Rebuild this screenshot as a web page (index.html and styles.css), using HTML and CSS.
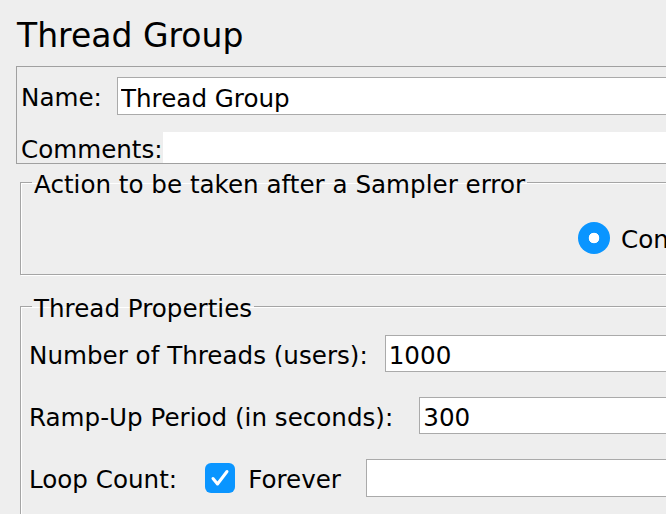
FILE: index.html
```html
<!DOCTYPE html>
<html lang="en">

<head>
    <meta charset="UTF-8">
    <meta name="viewport" content="width=device-width, initial-scale=1.0">
    <title>Thread Group</title>
    <link rel="stylesheet" href="styles.css">
</head>

<body>
    <div id="page">
        <h1 class="title">Thread Group</h1>

        <div class="name-box">
            <div class="row name-row">
                <label class="label name-label">Name:</label>
                <input class="field" type="text" value="Thread Group">
            </div>
            <div class="row comments-row">
                <label class="label">Comments:</label>
                <textarea class="comments"></textarea>
            </div>
        </div>

        <fieldset class="group action-group">
            <legend>Action to be taken after a Sampler error</legend>
            <div class="radios">
                <label class="radio">
                    <input type="radio" name="action" checked>
                    <span class="label">Continue</span>
                </label>
            </div>
        </fieldset>

        <fieldset class="group thread-group">
            <legend>Thread Properties</legend>
            <div class="row prop-row first">
                <label class="label">Number of Threads (users):</label>
                <input class="field" type="text" value="1000">
            </div>
            <div class="row prop-row">
                <label class="label">Ramp-Up Period (in seconds):</label>
                <input class="field ramp-field" type="text" value="300">
            </div>
            <div class="row prop-row loop-row">
                <label class="label">Loop Count:</label>
                <span class="check">
                    <svg width="30" height="30" viewBox="0 0 30 30">
                        <path d="M8 15.5 L12.5 21 L22 8.5" fill="none" stroke="#fff" stroke-width="3"
                            stroke-linecap="round" stroke-linejoin="round" />
                    </svg>
                </span>
                <span class="label forever">Forever</span>
                <input class="field loop-field" type="text" value="">
            </div>
        </fieldset>
    </div>
</body>

</html>
```

FILE: styles.css
```css
* {
    margin: 0;
    padding: 0;
    box-sizing: border-box;
}

body {
    background: #eeeeee;
    font-family: "DejaVu Sans", sans-serif;
    font-size: 24.6px;
    color: #000;
    overflow: hidden;
}

#page {
    width: 760px;
}

.title {
    font-size: 33px;
    font-weight: normal;
    line-height: 36px;
    padding: 18px 0 0 17px;
}

.row {
    display: flex;
    align-items: center;
}

.label {
    line-height: 28px;
    padding-top: 4px;
    white-space: nowrap;
}

.field {
    flex: 1;
    height: 100%;
    min-width: 0;
    border: 1px solid #aaaaaa;
    background: #fff;
    font: inherit;
    color: #000;
    padding: 4px 3px 0;
    outline: none;
}

/* name / comments */
.name-box {
    margin: 12px 0 0 16px;
    border: 1px solid #a0a0a0;
    padding: 10px 0 0 4px;
}

.name-row {
    height: 38px;
}

.name-label {
    width: 96px;
}

.comments-row {
    height: 31px;
    margin-top: 17px;
}

.comments {
    flex: 1;
    height: 31px;
    border: 0;
    resize: none;
    background: #fff;
    font: inherit;
}

/* titled borders */
.group {
    margin: 2px 0 0 20px;
    border: 1px solid #a5a5a5;
    box-shadow: 1px 1px 0 #fff, inset 1px 1px 0 #fff;
    padding: 0 0 20px 8px;
    min-width: 0;
}

.group legend {
    margin-left: 3px;
    padding: 5px 2px 0;
    line-height: 28px;
}

.radios {
    display: flex;
    height: 32px;
    margin: 23px 0 0 549px;
}

.radio {
    display: flex;
    align-items: center;
    gap: 11px;
    white-space: nowrap;
}

.radio input {
    appearance: none;
    -webkit-appearance: none;
    flex: none;
    width: 32px;
    height: 32px;
    border-radius: 50%;
    background: radial-gradient(circle, #fff 0 5px, #0a95ff 5.6px);
}

.thread-group {
    margin-top: 15px;
}

.prop-row {
    height: 37px;
    margin-top: 25px;
}

.prop-row.first {
    margin-top: 12px;
}

.prop-row .field {
    margin-left: 17px;
}

.prop-row .ramp-field {
    margin-left: 26px;
}

.loop-row {
    height: 38px;
}

.check {
    flex: none;
    width: 30px;
    height: 30px;
    margin-left: 28px;
    border-radius: 6px;
    background: #0a95ff;
}

.check svg {
    display: block;
}

.forever {
    margin-left: 13px;
}

.prop-row .loop-field {
    margin-left: 25px;
}
```
